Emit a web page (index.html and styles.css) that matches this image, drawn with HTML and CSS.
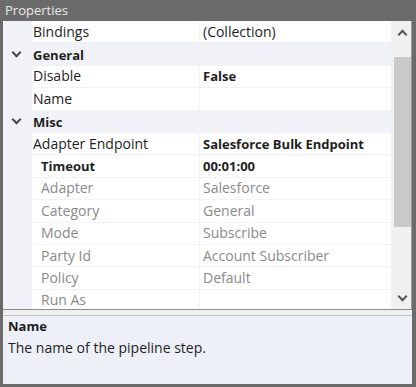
FILE: index.html
```html
<!DOCTYPE html>
<html lang="en">
<head>
  <meta charset="UTF-8">
  <meta name="viewport" content="width=device-width, initial-scale=1.0">
  <title>Properties</title>
  <link rel="stylesheet" href="styles.css">
</head>
<body>
  <div class="panel">
    <div class="titlebar">Properties</div>

    <div class="grid">
      <div class="rows">
        <div class="row">
          <div class="gutter"></div>
          <div class="name">Bindings</div>
          <div class="value">(Collection)</div>
        </div>

        <div class="row category">
          <div class="gutter"><span class="chevron"></span></div>
          <div class="name">General</div>
        </div>
        <div class="row">
          <div class="gutter"></div>
          <div class="name">Disable</div>
          <div class="value bold">False</div>
        </div>
        <div class="row">
          <div class="gutter"></div>
          <div class="name">Name</div>
          <div class="value"></div>
        </div>

        <div class="row category">
          <div class="gutter"><span class="chevron"></span></div>
          <div class="name">Misc</div>
        </div>
        <div class="row">
          <div class="gutter"></div>
          <div class="name">Adapter Endpoint</div>
          <div class="value bold">Salesforce Bulk Endpoint</div>
        </div>
        <div class="row sub">
          <div class="gutter"></div>
          <div class="name bold">Timeout</div>
          <div class="value bold">00:01:00</div>
        </div>
        <div class="row sub muted">
          <div class="gutter"></div>
          <div class="name">Adapter</div>
          <div class="value">Salesforce</div>
        </div>
        <div class="row sub muted">
          <div class="gutter"></div>
          <div class="name">Category</div>
          <div class="value">General</div>
        </div>
        <div class="row sub muted">
          <div class="gutter"></div>
          <div class="name">Mode</div>
          <div class="value">Subscribe</div>
        </div>
        <div class="row sub muted">
          <div class="gutter"></div>
          <div class="name">Party Id</div>
          <div class="value">Account Subscriber</div>
        </div>
        <div class="row sub muted">
          <div class="gutter"></div>
          <div class="name">Policy</div>
          <div class="value">Default</div>
        </div>
        <div class="row sub muted last">
          <div class="gutter"></div>
          <div class="name">Run As</div>
          <div class="value"></div>
        </div>
      </div>

      <div class="scrollbar">
        <div class="arrow up"></div>
        <div class="track">
          <div class="thumb"></div>
        </div>
        <div class="arrow down"></div>
      </div>
    </div>

    <div class="splitter"></div>

    <div class="desc">
      <div class="desc-title">Name</div>
      <div class="desc-text">The name of the pipeline step.</div>
    </div>
  </div>
</body>
</html>
```

FILE: styles.css
```css
body {
  margin: 0;
  font-family: "Open Sans", "Noto Sans", sans-serif;
  font-size: 14px;
  color: #1e1e1e;
}
.panel {
  width: 416px;
  height: 387px;
  box-sizing: border-box;
  background-color: #6b6b6b;
  padding: 0 4px 3px 3px;
  display: flex;
  flex-direction: column;
}
.titlebar {
  height: 21px;
  line-height: 21px;
  padding-left: 2px;
  font-size: 13px;
  color: #e8e8e8;
  flex-shrink: 0;
}
.grid {
  height: 288px;
  display: flex;
  background-color: #ffffff;
  overflow: hidden;
  flex-shrink: 0;
}
.rows {
  flex: 1;
  overflow: hidden;
}
.row {
  display: flex;
  height: 22.4px;
}
/* the last row is only partly visible above the splitter */
.row.last {
  height: 19.2px;
}
.last .name,
.last .value {
  border-bottom: none;
  line-height: 19px;
}
.gutter {
  width: 27px;
  flex-shrink: 0;
  background-color: #f0f2f7;
  display: flex;
  align-items: center;
  justify-content: center;
  padding-right: 2px;
}
.name,
.value {
  display: flex;
  align-items: center;
  line-height: 14px;
  white-space: nowrap;
  overflow: hidden;
  border-bottom: 1px solid #f0f2f7;
}
.name {
  width: 166px;
  flex-shrink: 0;
  padding-left: 1px;
  border-right: 1px solid #f0f2f7;
}
.value {
  flex: 1;
  padding-left: 3px;
}
.category {
  background-color: #f0f2f7;
}
.category .name {
  border: none;
}
.sub .name {
  padding-left: 9px;
  width: 158px;
}
.bold,
.category .name {
  font-weight: bold;
  font-size: 13px;
}
.muted {
  color: #8a8a8a;
}
.chevron {
  width: 5px;
  height: 5px;
  border-right: 2px solid #4a4a4a;
  border-bottom: 2px solid #4a4a4a;
  transform: rotate(45deg);
  margin-top: -4px;
}
.scrollbar {
  width: 20px;
  background-color: #f0f0f0;
  display: flex;
  flex-direction: column;
  border-right: 1px solid #9a9a9a;
}
.arrow {
  height: 22px;
  display: flex;
  align-items: center;
  justify-content: center;
}
.arrow::before {
  content: "";
  width: 5px;
  height: 5px;
  border-left: 2px solid #555;
  border-top: 2px solid #555;
  margin-left: 2px;
}
.up::before {
  transform: rotate(45deg);
  margin-top: 4px;
}
.down::before {
  transform: rotate(225deg);
  margin-top: -4px;
}
.track {
  flex: 1;
  padding: 14px 0 0 3px;
}
.thumb {
  height: 170px;
  background-color: #c9c9c9;
}
.splitter {
  height: 7px;
  flex-shrink: 0;
  background-color: #f0f0f0;
  border-top: 1px solid #8c8c8c;
  border-bottom: 1px solid #c4c4c4;
  box-sizing: border-box;
}
.desc {
  flex: 1;
  background-color: #eef0f8;
  padding: 0 5px;
  line-height: 21px;
}
.desc-title {
  font-weight: bold;
  font-size: 13px;
}
.desc-text {
  font-size: 14px;
}
```
